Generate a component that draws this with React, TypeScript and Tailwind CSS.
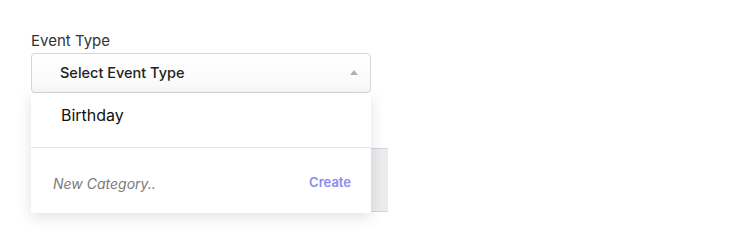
import React from 'react';

export default function App() {
  return (
    <div className="min-h-screen bg-white pl-[31px] pt-[31px] font-['Inter',sans-serif]">
      <div className="w-[357px]">
        {/* Label */}
        <label className="block text-[15px] leading-[20px] text-[#333]">Event Type</label>

        {/* Select trigger */}
        <button className="mt-[2px] flex h-[40px] w-[340px] items-center justify-between rounded-[4px] border border-[#d6d6d6] bg-gradient-to-b from-white to-[#f9f9f9] pl-[28px] pr-[12px] text-left">
          <span className="text-[14.5px] font-medium text-[#222]">Select Event Type</span>
          <svg width="8" height="5" viewBox="0 0 8 5" className="mt-[-2px]">
            <path d="M0 5 L4 0 L8 5 Z" fill="#b0b0b0" />
          </svg>
        </button>

        {/* Content underneath + open menu */}
        <div className="relative">
          <div className="h-[55px] bg-white" />
          <div className="h-[64px] border-y border-[#c9d7e6] bg-[#ececec]" />

          <div className="absolute left-0 top-0 w-[340px] bg-white shadow-[0_4px_14px_rgba(0,0,0,0.12)]">
            <div className="h-[54px] pl-[30px] pt-[12px] text-[16px] leading-[20px] text-[#111]">Birthday</div>
            <div className="h-px bg-[#e6e6e6]" />
            <div className="flex h-[65px] items-center justify-between pl-[22px] pr-[20px] pt-[5px]">
              <span className="text-[14px] italic text-[#7a7a7a]">New Category..</span>
              <span className="text-[13px] font-semibold text-[#8a8af0]">Create</span>
            </div>
          </div>
        </div>
      </div>
    </div>
  );
}
